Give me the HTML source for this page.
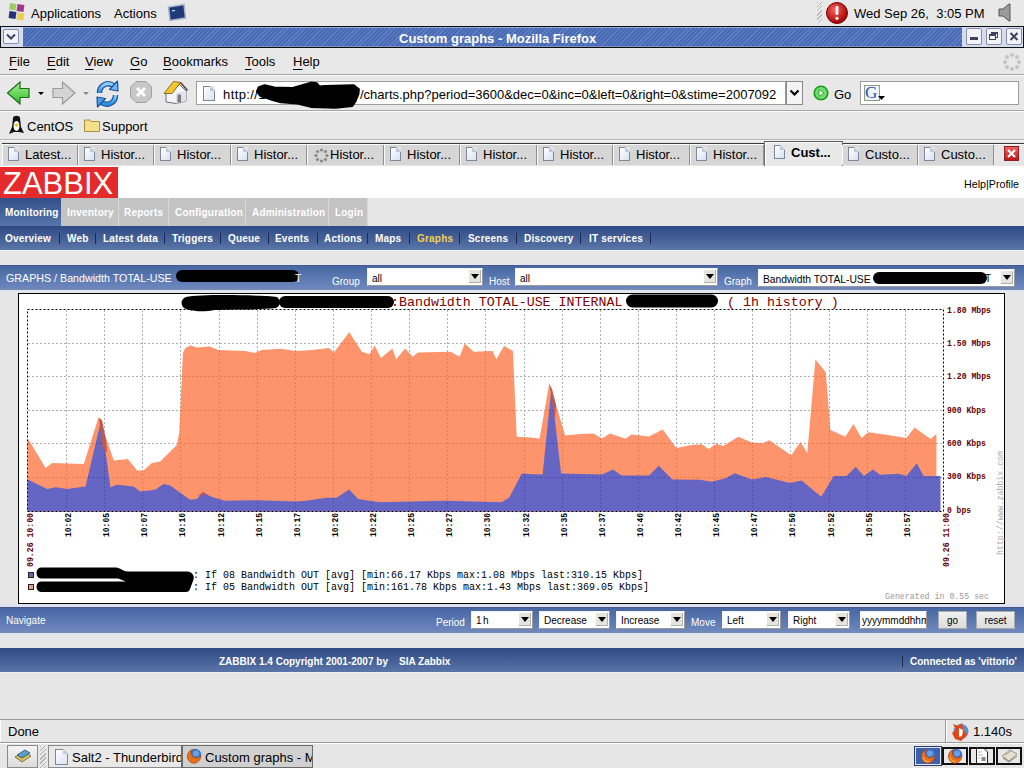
<!DOCTYPE html>
<html><head><meta charset="utf-8">
<style>
*{margin:0;padding:0;box-sizing:border-box}
html,body{width:1024px;height:768px;overflow:hidden;background:#e6e6e6;font-family:"Liberation Sans",sans-serif;color:#000}
.a{position:absolute}
.t{position:absolute;white-space:nowrap;line-height:1}
.sep{position:absolute;left:0;width:1024px;height:1px;background:#a6a6a6}
.hl{position:absolute;left:0;width:1024px;height:1px;background:#fbfbfb}
.zb{position:absolute;left:0;width:1024px}
.u{text-decoration:underline;text-underline-offset:3px}
.ff{font-size:13px}
.tab{position:absolute;top:145px;height:20px;background:#d6d6d6;border-left:1px solid #fafafa;border-right:1px solid #8e8e8e;font-size:13px}
.tab .pg{left:5px;top:2px;width:11px;height:14px}
.tab .t{left:22px;top:3px}
.pg{position:absolute;width:12px;height:15px;background:linear-gradient(135deg,#fff,#d9e2f2);border:1px solid #7d869c}
.pg:after{content:"";position:absolute;right:-1px;top:-1px;border-left:4px solid #bcc6dc;border-bottom:4px solid #bcc6dc;border-top:4px solid #e6e6e6;border-right:4px solid #e6e6e6;width:0;height:0;transform:scale(.6);transform-origin:100% 0}
.zs{position:absolute;height:18px;background:#fff;border-top:1px solid #f4f4f4;border-left:1px solid #f4f4f4;border-right:1px solid #999;border-bottom:1px solid #999;font-size:10px}
.zs i{position:absolute;right:1px;top:1px;width:12px;height:13px;background:#e6e4de;border-right:1px solid #b0b0b0;border-bottom:1px solid #b0b0b0}
.zs i:after{content:"";position:absolute;left:2px;top:4px;border-left:4px solid transparent;border-right:4px solid transparent;border-top:5px solid #000}
.zs b{position:absolute;left:4px;top:4px;font-weight:normal;white-space:nowrap;line-height:1}
.zl{position:absolute;color:#fff;font-size:10px;line-height:1;white-space:nowrap}
.mt{position:absolute;top:198px;height:28px;background:#c3c3c3;border-right:1px solid #d8d8d8;color:#fff;font-weight:bold;font-size:10px}
.mt span{position:absolute;top:10px;letter-spacing:0.2px;white-space:nowrap;line-height:1}
.sm{position:absolute;top:234px;color:#fff;font-weight:bold;font-size:10px;letter-spacing:0.2px;line-height:1;white-space:nowrap}
.smsep{position:absolute;top:233px;width:1px;height:11px;background:#1b2a55}
.btn{position:absolute;height:18px;background:linear-gradient(#f0f0f0,#dcdcdc);border:1px solid #aaa;font-size:10px;text-align:center;line-height:18px}
</style></head><body>
<!-- ===== GNOME panel ===== -->
<div class="a" style="left:0;top:0;width:1024px;height:25px;background:#e8e8e8"></div>
<svg class="a" style="left:6px;top:2px" width="22" height="20" viewBox="0 0 22 20">
 <rect x="3.5" y="1.5" width="6.5" height="6.5" fill="#9ccc66" transform="rotate(8 7 5)"/>
 <rect x="11" y="2.5" width="7" height="7" fill="#9b3b8b" transform="rotate(8 14 6)"/>
 <rect x="3" y="9.5" width="7" height="7" fill="#25307a" transform="rotate(8 6 13)"/>
 <rect x="11" y="11" width="7" height="7" fill="#e8d050" transform="rotate(8 14 14)"/>
</svg>
<div class="t ff" style="left:31px;top:7px">Applications</div>
<div class="t ff" style="left:114px;top:7px">Actions</div>
<svg class="a" style="left:167px;top:3px" width="20" height="19" viewBox="0 0 20 19">
 <path d="M1.5,4 L17,1.5 L18.5,15 L3,17.5Z" fill="#1e3a78" stroke="#a8b4c8" stroke-width="1.5"/>
 <path d="M5,8 L8,7.5" stroke="#fff" stroke-width="1"/>
</svg>
<div class="a" style="left:817px;top:2px;width:5px;height:21px;background:repeating-linear-gradient(135deg,#b8b8b8 0 1px,transparent 1px 3px)"></div>
<svg class="a" style="left:825px;top:1px" width="24" height="24" viewBox="0 0 24 24">
 <defs><radialGradient id="rg" cx="40%" cy="35%" r="65%"><stop offset="0" stop-color="#ff6060"/><stop offset="1" stop-color="#a00000"/></radialGradient></defs>
 <circle cx="12" cy="12" r="10.5" fill="url(#rg)" stroke="#700" stroke-width="1"/>
 <rect x="10.6" y="5" width="2.8" height="9" rx="1" fill="#fff"/><circle cx="12" cy="17.3" r="1.6" fill="#fff"/>
</svg>
<div class="t ff" style="left:854px;top:7px">Wed Sep 26,&nbsp; 3:05 PM</div>
<svg class="a" style="left:997px;top:3px" width="16" height="19" viewBox="0 0 16 19">
 <path d="M2,6 L6,6 L12,1 L13,1 L13,18 L12,18 L6,13 L2,13Z" fill="#9a9a9a" stroke="#555" stroke-width="1"/>
</svg>

<!-- ===== title bar ===== -->
<div class="a" style="left:0;top:26px;width:1024px;height:22px;background:#101010"></div>
<div class="a" style="left:1px;top:27px;width:22px;height:20px;background:#d4dcef"></div>
<div class="a" style="left:3px;top:29px;width:16px;height:15px;background:#f2f2f6;border:1px solid #8a8fa6;border-radius:2px"></div>
<svg class="a" style="left:6px;top:33px" width="10" height="7"><path d="M1,1.5 L5,5.5 L9,1.5" fill="none" stroke="#3c4260" stroke-width="2"/></svg>
<div class="a" style="left:23px;top:27px;width:939px;height:20px;background:repeating-linear-gradient(135deg,#4a6ab4 0px,#4a6ab4 2px,#6282c8 2px,#6282c8 3px)"></div>
<div class="a" style="left:23px;top:27px;width:939px;height:1px;background:#90a8dc"></div>
<div class="a" style="left:23px;top:46px;width:939px;height:1px;background:#7890c4"></div>
<div class="a" style="left:962px;top:27px;width:61px;height:20px;background:#d4dcef"></div>
<div class="a" style="left:966px;top:28px;width:16px;height:17px;background:#f2f2f6;border:1px solid #8a8fa6;border-radius:2px"></div>
<div class="a" style="left:970px;top:37px;width:8px;height:3px;background:#3c4260"></div>
<div class="a" style="left:986px;top:28px;width:16px;height:17px;background:#f2f2f6;border:1px solid #8a8fa6;border-radius:2px"></div>
<div class="a" style="left:991px;top:32px;width:7px;height:6px;border:1px solid #3c4260;border-top-width:2px"></div>
<div class="a" style="left:989px;top:34px;width:7px;height:6px;border:1px solid #3c4260;border-top-width:2px;background:#f2f2f6"></div>
<div class="a" style="left:1006px;top:28px;width:16px;height:17px;background:#f2f2f6;border:1px solid #8a8fa6;border-radius:2px"></div>
<svg class="a" style="left:1009px;top:32px" width="10" height="9"><path d="M1.5,1 L8.5,8 M8.5,1 L1.5,8" stroke="#3c4260" stroke-width="2"/></svg>
<div class="t" style="left:399px;top:32px;font-size:13px;font-weight:bold;color:#fff">Custom graphs - Mozilla Firefox</div>

<!-- ===== menu bar ===== -->
<div class="a" style="left:0;top:48px;width:1024px;height:90px;background:#e8e8e8"></div>
<div class="t ff" style="left:9px;top:55px"><span class="u">F</span>ile</div>
<div class="t ff" style="left:47px;top:55px"><span class="u">E</span>dit</div>
<div class="t ff" style="left:85px;top:55px"><span class="u">V</span>iew</div>
<div class="t ff" style="left:130px;top:55px"><span class="u">G</span>o</div>
<div class="t ff" style="left:163px;top:55px"><span class="u">B</span>ookmarks</div>
<div class="t ff" style="left:245px;top:55px"><span class="u">T</span>ools</div>
<div class="t ff" style="left:293px;top:55px"><span class="u">H</span>elp</div>
<svg class="a" style="left:1002px;top:52px" width="20" height="20" viewBox="0 0 20 20">
 <g fill="#c4c4c4"><circle cx="10" cy="3" r="2"/><circle cx="15" cy="5" r="2"/><circle cx="17" cy="10" r="2"/><circle cx="15" cy="15" r="2"/><circle cx="10" cy="17" r="2"/><circle cx="5" cy="15" r="2"/><circle cx="3" cy="10" r="2"/><circle cx="5" cy="5" r="2"/></g>
</svg>
<div class="sep" style="top:74px"></div><div class="hl" style="top:75px"></div>

<!-- ===== nav toolbar ===== -->
<svg class="a" style="left:0;top:76px" width="200" height="34" viewBox="0 0 200 34">
 <defs>
  <linearGradient id="gg" x1="0" y1="0" x2="0" y2="1"><stop offset="0" stop-color="#a8f08a"/><stop offset="1" stop-color="#2ebd2e"/></linearGradient>
  <linearGradient id="bg" x1="0" y1="0" x2="0" y2="1"><stop offset="0" stop-color="#8fd0f8"/><stop offset="1" stop-color="#2a8ee0"/></linearGradient>
 </defs>
 <path d="M7.5,17 L20,6 L20,12.5 L29,12.5 L29,21.5 L20,21.5 L20,28 Z" fill="url(#gg)" stroke="#1e6a1e" stroke-width="1.2"/>
 <path d="M38,16 L44,16 L41,19Z" fill="#000"/>
 <path d="M75,17 L62.5,6 L62.5,12.5 L53,12.5 L53,21.5 L62.5,21.5 L62.5,28 Z" fill="#d4d4d4" stroke="#9a9a9a" stroke-width="1.2"/>
 <path d="M83,16 L89,16 L86,19Z" fill="#888"/>
 <path d="M99.5,17 C99.5,9 108,5 114,10" fill="none" stroke="#1d4f9a" stroke-width="5.5"/>
 <path d="M99.5,17 C99.5,9 108,5 114,10" fill="none" stroke="url(#bg)" stroke-width="3.2"/>
 <path d="M109.5,13.5 L118,15 L117.5,5 Z" fill="#6ab8f0" stroke="#1d4f9a" stroke-width="1.2" stroke-linejoin="round"/>
 <path d="M115.5,19 C115.5,27 107,31 101,26" fill="none" stroke="#1d4f9a" stroke-width="5.5"/>
 <path d="M115.5,19 C115.5,27 107,31 101,26" fill="none" stroke="url(#bg)" stroke-width="3.2"/>
 <path d="M105.5,22.5 L97,21 L97.5,31 Z" fill="#4aa0e8" stroke="#1d4f9a" stroke-width="1.2" stroke-linejoin="round"/>
 <path d="M136,5.5 L146,5.5 L151.5,11 L151.5,21 L146,26.5 L136,26.5 L130.5,21 L130.5,11Z" fill="#c8c8c8" stroke="#a2a2a2" stroke-width="1"/>
 <path d="M137,12 L145,20 M145,12 L137,20" stroke="#fff" stroke-width="3"/>
 <path d="M166,17 L166,26 L176,27.5 L186,25 L186,15 L179,8 L172,16Z" fill="#f2f4f8" stroke="#6f7080" stroke-width="1"/>
 <path d="M176,17 L186,15 L186,25 L176,27.5Z" fill="#dfe3ea"/>
 <path d="M164,17.5 L173.5,5.5 L180.5,6.5 L172,17.5Z" fill="#f4c828" stroke="#8a7020" stroke-width="1" stroke-linejoin="round"/>
 <path d="M180.5,6.5 L187.5,14.5" stroke="#5a4a30" stroke-width="1.6"/>
 <rect x="177.5" y="18.5" width="3.5" height="8" fill="#7a7a7a"/>
</svg>
<div class="a" style="left:196px;top:81px;width:590px;height:24px;background:#fff;border:1px solid #9c9c9c"></div>
<div class="pg" style="left:203px;top:86px"></div>
<div class="t ff" style="left:223px;top:88px;letter-spacing:0.4px">http://1</div><div class="t ff" style="left:360px;top:88px">/charts.php?period=3600&amp;dec=0&amp;inc=0&amp;left=0&amp;right=0&amp;stime=2007092</div>
<svg class="a" style="left:0;top:0" width="400" height="112"><path d="M259.1,87.6 L264.6,85.8 L274.2,88.0 L292.0,88.6 L311.1,83.1 L316.6,83.7 L319.0,86.9 L324.8,86.4 L353.5,85.8 L358.4,89.4 L357.9,94.0 L355.1,100.9 L352.1,105.4 L335.7,107.2 L311.1,106.4 L297.4,103.1 L281.0,101.7 L272.8,99.5 L260.5,95.4 L257.5,91.3Z" fill="#000" stroke="#000" stroke-width="3" stroke-linejoin="round"/></svg>
<div class="a" style="left:786px;top:81px;width:17px;height:24px;background:#f4f4f4;border:1px solid #8a8a8a"></div>
<svg class="a" style="left:789px;top:89px" width="11" height="8"><path d="M1.5,1.5 L5.5,5.5 L9.5,1.5" fill="none" stroke="#000" stroke-width="2.2"/></svg>
<svg class="a" style="left:813px;top:85px" width="16" height="16" viewBox="0 0 16 16">
 <circle cx="8" cy="8" r="6.8" fill="#6fdc6f" stroke="#1d9a1d" stroke-width="1.6"/>
 <path d="M6,4.5 L11,8 L6,11.5Z" fill="#fff" stroke="#1d9a1d" stroke-width="0.8"/>
</svg>
<div class="t ff" style="left:834px;top:88px">Go</div>
<div class="a" style="left:860px;top:81px;width:159px;height:24px;background:#fff;border:1px solid #9c9c9c"></div>
<div class="a" style="left:864px;top:85px;width:16px;height:16px;background:#eef4ff;border:1px solid #8aa080"></div>
<div class="t" style="left:865px;top:84px;font-family:'Liberation Serif',serif;font-size:17px;color:#2850b0">G</div>
<svg class="a" style="left:878px;top:96px" width="8" height="5"><path d="M0,0 L7,0 L3.5,4Z" fill="#000"/></svg>
<div class="sep" style="top:110px"></div><div class="hl" style="top:111px"></div>

<!-- ===== bookmarks ===== -->
<svg class="a" style="left:8px;top:115px" width="17" height="20" viewBox="0 0 17 20">
 <path d="M5,3 C5,0 12,0 12,3 L13,12 L16,18 L11,17 L6,17 L1,19 L4,12Z" fill="#111"/>
 <ellipse cx="8.5" cy="11" rx="3" ry="5" fill="#fff"/>
 <path d="M6,9 L11,9 L8.5,12Z" fill="#f0c000"/>
</svg>
<div class="t ff" style="left:27px;top:120px">CentOS</div>
<svg class="a" style="left:84px;top:118px" width="16" height="14" viewBox="0 0 16 14">
 <path d="M0.5,2 L6,2 L7,3.5 L15.5,3.5 L15.5,13.5 L0.5,13.5Z" fill="#f4e08a" stroke="#a89040" stroke-width="1"/>
</svg>
<div class="t ff" style="left:102px;top:120px">Support</div>
<div class="a" style="left:0;top:139px;width:1024px;height:1px;background:#b4b4b4"></div>
<div class="a" style="left:0;top:140px;width:1024px;height:1px;background:#f8f8f8"></div>

<!-- ===== tabs ===== -->
<div class="a" style="left:0;top:141px;width:1024px;height:25px;background:#e6e6e6"></div>
<div class="a" style="left:2px;top:143px;width:1022px;height:1px;background:#3c3c3c"></div>
<div class="a" style="left:2px;top:144px;width:1022px;height:1px;background:#fcfcfc"></div>
<div class="tab" style="left:2px;width:76px"><div class="pg"></div><div class="t">Latest...</div></div>
<div class="tab" style="left:78px;width:76px"><div class="pg"></div><div class="t">Histor...</div></div>
<div class="tab" style="left:154px;width:77px"><div class="pg"></div><div class="t">Histor...</div></div>
<div class="tab" style="left:231px;width:76px"><div class="pg"></div><div class="t">Histor...</div></div>
<div class="tab" style="left:307px;width:77px"><svg class="a" style="left:6px;top:3px" width="15" height="15" viewBox="0 0 15 15"><g fill="#888"><circle cx="7.5" cy="2" r="1.6"/><circle cx="11.5" cy="3.5" r="1.6"/><circle cx="13" cy="7.5" r="1.6"/><circle cx="11.5" cy="11.5" r="1.6"/><circle cx="7.5" cy="13" r="1.6"/><circle cx="3.5" cy="11.5" r="1.6"/><circle cx="2" cy="7.5" r="1.6"/><circle cx="3.5" cy="3.5" r="1.6"/></g></svg><div class="t">Histor...</div></div>
<div class="tab" style="left:384px;width:76px"><div class="pg"></div><div class="t">Histor...</div></div>
<div class="tab" style="left:460px;width:77px"><div class="pg"></div><div class="t">Histor...</div></div>
<div class="tab" style="left:537px;width:76px"><div class="pg"></div><div class="t">Histor...</div></div>
<div class="tab" style="left:613px;width:77px"><div class="pg"></div><div class="t">Histor...</div></div>
<div class="tab" style="left:690px;width:74px"><div class="pg"></div><div class="t">Histor...</div></div>
<div class="a" style="left:764px;top:141px;width:79px;height:25px;background:#e8e8e8;border-left:1px solid #707070;border-right:1px solid #707070;border-top:1px solid #555"></div>
<div class="a" style="left:765px;top:142px;width:77px;height:1px;background:#fff"></div>
<div class="a" style="left:765px;top:142px;width:1px;height:23px;background:#fff"></div>
<div class="pg" style="left:774px;top:145px;width:11px;height:14px"></div>
<div class="t" style="left:791px;top:146px;font-size:13px;font-weight:bold">Cust...</div>
<div class="tab" style="left:842px;width:76px"><div class="pg"></div><div class="t">Custo...</div></div>
<div class="tab" style="left:918px;width:76px"><div class="pg"></div><div class="t">Custo...</div></div>
<div class="a" style="left:1004px;top:146px;width:15px;height:15px;background:linear-gradient(#f06060,#c01818);border:1px solid #902020"></div>
<svg class="a" style="left:1006px;top:148px" width="11" height="11"><path d="M2,2 L9,9 M9,2 L2,9" stroke="#fff" stroke-width="2.2"/></svg>

<!-- ===== zabbix header ===== -->
<div class="a" style="left:0;top:166px;width:1024px;height:32px;background:#fff"></div>
<div class="a" style="left:0;top:167px;width:118px;height:31px;background:#e42a2a"></div>
<div class="t" style="left:3px;top:168px;font-size:31px;color:#fff">ZABBIX</div>
<div class="t" style="left:964px;top:179px;font-size:10.7px">Help|Profile</div>

<!-- main menu -->
<div class="mt" style="left:0;width:61px;background:linear-gradient(#344f88,#5875ab);border-right:0"><span style="left:5px">Monitoring</span></div>
<div class="mt" style="left:61px;width:58px"><span style="left:6px">Inventory</span></div>
<div class="mt" style="left:119px;width:50px"><span style="left:5px">Reports</span></div>
<div class="mt" style="left:169px;width:77px"><span style="left:6px">Configuration</span></div>
<div class="mt" style="left:246px;width:83px"><span style="left:6px">Administration</span></div>
<div class="mt" style="left:329px;width:39px"><span style="left:6px">Login</span></div>

<!-- sub menu -->
<div class="zb" style="top:226px;height:24px;background:linear-gradient(#2f4984,#5a75a8)"></div>
<div class="sm" style="left:5px;color:#fff">Overview</div>
<div class="sm" style="left:67px;color:#fff">Web</div>
<div class="sm" style="left:103px;color:#fff">Latest data</div>
<div class="sm" style="left:172px;color:#fff">Triggers</div>
<div class="sm" style="left:228px;color:#fff">Queue</div>
<div class="sm" style="left:275px;color:#fff">Events</div>
<div class="sm" style="left:324px;color:#fff">Actions</div>
<div class="sm" style="left:375px;color:#fff">Maps</div>
<div class="sm" style="left:417px;color:#f0d050">Graphs</div>
<div class="sm" style="left:468px;color:#fff">Screens</div>
<div class="sm" style="left:524px;color:#fff">Discovery</div>
<div class="sm" style="left:589px;color:#fff">IT services</div>
<div class="smsep" style="left:59px"></div>
<div class="smsep" style="left:95px"></div>
<div class="smsep" style="left:164px"></div>
<div class="smsep" style="left:220px"></div>
<div class="smsep" style="left:268px"></div>
<div class="smsep" style="left:317px"></div>
<div class="smsep" style="left:367px"></div>
<div class="smsep" style="left:409px"></div>
<div class="smsep" style="left:459px"></div>
<div class="smsep" style="left:516px"></div>
<div class="smsep" style="left:580px"></div>
<div class="smsep" style="left:650px"></div>

<!-- graphs bar -->
<div class="zb" style="top:250px;height:1px;background:#eef0f8"></div>
<div class="zb" style="top:264px;height:1px;background:#e4e8f4"></div>
<div class="zb" style="top:265px;height:25px;background:linear-gradient(#4a66a0,#4b6ba6 15%,#6c86bd 90%,#7a8ab0)"></div>
<div class="zb" style="top:265px;height:1px;background:#4a5888"></div>
<div class="zb" style="top:290px;height:2px;background:#e2e6f2"></div>
<div class="zl" style="left:6px;top:273px;font-size:10.7px">GRAPHS / Bandwidth TOTAL-USE</div>
<div class="a" style="left:176px;top:270px;width:123px;height:12px;border-radius:6px;background:#000"></div>
<div class="zl" style="left:295px;top:273px;font-size:10.7px">T</div>
<div class="zl" style="left:332px;top:277px">Group</div>
<div class="zs" style="left:367px;top:268px;width:116px"><b style="top:5px">all</b><i></i></div>
<div class="zl" style="left:489px;top:277px">Host</div>
<div class="zs" style="left:515px;top:268px;width:203px"><b style="top:5px">all</b><i></i></div>
<div class="zl" style="left:724px;top:277px">Graph</div>
<div class="zs" style="left:758px;top:269px;width:257px"><b style="top:5px;font-size:10.3px">Bandwidth TOTAL-USE</b><i></i></div>
<div class="a" style="left:873px;top:272px;width:114px;height:12px;border-radius:6px;background:#000"></div>
<div class="t" style="left:985px;top:274px;font-size:10px">T</div>

<svg class="a" style="left:0;top:0" width="1024" height="768">
<rect x="18.5" y="293.5" width="986" height="310" fill="#fff" stroke="#000" stroke-width="1"/>
<line x1="28" y1="343.5" x2="943" y2="343.5" stroke="#b0b0b0" stroke-opacity="1" stroke-dasharray="2,2"/>
<line x1="28" y1="376.5" x2="943" y2="376.5" stroke="#b0b0b0" stroke-opacity="1" stroke-dasharray="2,2"/>
<line x1="28" y1="410.5" x2="943" y2="410.5" stroke="#b0b0b0" stroke-opacity="1" stroke-dasharray="2,2"/>
<line x1="28" y1="443.5" x2="943" y2="443.5" stroke="#b0b0b0" stroke-opacity="1" stroke-dasharray="2,2"/>
<line x1="28" y1="477.5" x2="943" y2="477.5" stroke="#b0b0b0" stroke-opacity="1" stroke-dasharray="2,2"/>
<line x1="66.5" y1="310" x2="66.5" y2="511" stroke="#b0b0b0" stroke-opacity="1" stroke-dasharray="2,2"/>
<line x1="104.5" y1="310" x2="104.5" y2="511" stroke="#b0b0b0" stroke-opacity="1" stroke-dasharray="2,2"/>
<line x1="142.5" y1="310" x2="142.5" y2="511" stroke="#b0b0b0" stroke-opacity="1" stroke-dasharray="2,2"/>
<line x1="180.5" y1="310" x2="180.5" y2="511" stroke="#b0b0b0" stroke-opacity="1" stroke-dasharray="2,2"/>
<line x1="219.5" y1="310" x2="219.5" y2="511" stroke="#b0b0b0" stroke-opacity="1" stroke-dasharray="2,2"/>
<line x1="257.5" y1="310" x2="257.5" y2="511" stroke="#b0b0b0" stroke-opacity="1" stroke-dasharray="2,2"/>
<line x1="295.5" y1="310" x2="295.5" y2="511" stroke="#b0b0b0" stroke-opacity="1" stroke-dasharray="2,2"/>
<line x1="333.5" y1="310" x2="333.5" y2="511" stroke="#b0b0b0" stroke-opacity="1" stroke-dasharray="2,2"/>
<line x1="371.5" y1="310" x2="371.5" y2="511" stroke="#b0b0b0" stroke-opacity="1" stroke-dasharray="2,2"/>
<line x1="409.5" y1="310" x2="409.5" y2="511" stroke="#b0b0b0" stroke-opacity="1" stroke-dasharray="2,2"/>
<line x1="447.5" y1="310" x2="447.5" y2="511" stroke="#b0b0b0" stroke-opacity="1" stroke-dasharray="2,2"/>
<line x1="485.5" y1="310" x2="485.5" y2="511" stroke="#b0b0b0" stroke-opacity="1" stroke-dasharray="2,2"/>
<line x1="524.5" y1="310" x2="524.5" y2="511" stroke="#b0b0b0" stroke-opacity="1" stroke-dasharray="2,2"/>
<line x1="562.5" y1="310" x2="562.5" y2="511" stroke="#b0b0b0" stroke-opacity="1" stroke-dasharray="2,2"/>
<line x1="600.5" y1="310" x2="600.5" y2="511" stroke="#b0b0b0" stroke-opacity="1" stroke-dasharray="2,2"/>
<line x1="638.5" y1="310" x2="638.5" y2="511" stroke="#b0b0b0" stroke-opacity="1" stroke-dasharray="2,2"/>
<line x1="676.5" y1="310" x2="676.5" y2="511" stroke="#b0b0b0" stroke-opacity="1" stroke-dasharray="2,2"/>
<line x1="714.5" y1="310" x2="714.5" y2="511" stroke="#b0b0b0" stroke-opacity="1" stroke-dasharray="2,2"/>
<line x1="752.5" y1="310" x2="752.5" y2="511" stroke="#b0b0b0" stroke-opacity="1" stroke-dasharray="2,2"/>
<line x1="790.5" y1="310" x2="790.5" y2="511" stroke="#b0b0b0" stroke-opacity="1" stroke-dasharray="2,2"/>
<line x1="829.5" y1="310" x2="829.5" y2="511" stroke="#b0b0b0" stroke-opacity="1" stroke-dasharray="2,2"/>
<line x1="867.5" y1="310" x2="867.5" y2="511" stroke="#b0b0b0" stroke-opacity="1" stroke-dasharray="2,2"/>
<line x1="905.5" y1="310" x2="905.5" y2="511" stroke="#b0b0b0" stroke-opacity="1" stroke-dasharray="2,2"/>
<polygon points="27.5,511.5 27.5,439.0 28.2,439.0 45.6,468.0 52.2,463.0 83.8,464.0 98.8,416.6 113.7,460.6 127.8,459.0 137.0,470.6 143.6,470.6 151.9,463.0 160.2,461.5 176.8,444.9 179.3,433.0 182.9,353.0 185.4,348.0 190.5,345.4 196.8,347.4 209.5,346.6 218.4,350.0 245.0,351.0 255.2,353.0 261.6,350.0 280.6,348.7 295.8,351.0 312.3,350.0 328.8,348.0 333.9,352.5 349.2,332.2 361.9,351.7 369.5,354.3 374.6,345.4 381.0,358.0 392.4,348.4 396.2,359.3 405.0,348.4 412.7,356.8 417.8,352.5 450.8,351.7 459.6,356.8 464.7,343.4 473.6,351.7 492.6,351.0 496.4,359.3 504.0,346.0 512.9,351.0 516.7,436.8 526.9,437.3 539.6,438.4 549.4,382.7 556.2,405.2 565.0,435.4 580.6,434.0 593.3,433.5 602.1,438.4 610.0,433.5 625.6,438.8 631.4,434.5 649.0,436.4 662.7,429.6 676.3,448.0 690.0,445.2 701.7,444.2 708.6,449.0 716.4,443.8 723.2,446.0 738.2,436.8 752.0,442.6 762.4,443.2 769.3,440.3 791.2,455.2 800.4,441.9 807.3,453.0 815.4,359.6 825.8,372.3 830.4,429.9 845.4,436.8 853.4,424.1 861.5,438.0 868.4,432.2 884.5,434.5 906.4,438.0 914.5,427.6 930.6,439.1 936.4,434.0 936.4,511.5" fill="#fe946c"/>
<clipPath id="oclip"><polygon points="27.5,511.5 27.5,439.0 28.2,439.0 45.6,468.0 52.2,463.0 83.8,464.0 98.8,416.6 113.7,460.6 127.8,459.0 137.0,470.6 143.6,470.6 151.9,463.0 160.2,461.5 176.8,444.9 179.3,433.0 182.9,353.0 185.4,348.0 190.5,345.4 196.8,347.4 209.5,346.6 218.4,350.0 245.0,351.0 255.2,353.0 261.6,350.0 280.6,348.7 295.8,351.0 312.3,350.0 328.8,348.0 333.9,352.5 349.2,332.2 361.9,351.7 369.5,354.3 374.6,345.4 381.0,358.0 392.4,348.4 396.2,359.3 405.0,348.4 412.7,356.8 417.8,352.5 450.8,351.7 459.6,356.8 464.7,343.4 473.6,351.7 492.6,351.0 496.4,359.3 504.0,346.0 512.9,351.0 516.7,436.8 526.9,437.3 539.6,438.4 549.4,382.7 556.2,405.2 565.0,435.4 580.6,434.0 593.3,433.5 602.1,438.4 610.0,433.5 625.6,438.8 631.4,434.5 649.0,436.4 662.7,429.6 676.3,448.0 690.0,445.2 701.7,444.2 708.6,449.0 716.4,443.8 723.2,446.0 738.2,436.8 752.0,442.6 762.4,443.2 769.3,440.3 791.2,455.2 800.4,441.9 807.3,453.0 815.4,359.6 825.8,372.3 830.4,429.9 845.4,436.8 853.4,424.1 861.5,438.0 868.4,432.2 884.5,434.5 906.4,438.0 914.5,427.6 930.6,439.1 936.4,434.0 936.4,511.5"/></clipPath>
<g clip-path="url(#oclip)">
<line x1="28" y1="343.5" x2="943" y2="343.5" stroke="#c04818" stroke-opacity="0.32" stroke-dasharray="2,2"/>
<line x1="28" y1="376.5" x2="943" y2="376.5" stroke="#c04818" stroke-opacity="0.32" stroke-dasharray="2,2"/>
<line x1="28" y1="410.5" x2="943" y2="410.5" stroke="#c04818" stroke-opacity="0.32" stroke-dasharray="2,2"/>
<line x1="28" y1="443.5" x2="943" y2="443.5" stroke="#c04818" stroke-opacity="0.32" stroke-dasharray="2,2"/>
<line x1="28" y1="477.5" x2="943" y2="477.5" stroke="#c04818" stroke-opacity="0.32" stroke-dasharray="2,2"/>
<line x1="66.5" y1="310" x2="66.5" y2="511" stroke="#c04818" stroke-opacity="0.32" stroke-dasharray="2,2"/>
<line x1="104.5" y1="310" x2="104.5" y2="511" stroke="#c04818" stroke-opacity="0.32" stroke-dasharray="2,2"/>
<line x1="142.5" y1="310" x2="142.5" y2="511" stroke="#c04818" stroke-opacity="0.32" stroke-dasharray="2,2"/>
<line x1="180.5" y1="310" x2="180.5" y2="511" stroke="#c04818" stroke-opacity="0.32" stroke-dasharray="2,2"/>
<line x1="219.5" y1="310" x2="219.5" y2="511" stroke="#c04818" stroke-opacity="0.32" stroke-dasharray="2,2"/>
<line x1="257.5" y1="310" x2="257.5" y2="511" stroke="#c04818" stroke-opacity="0.32" stroke-dasharray="2,2"/>
<line x1="295.5" y1="310" x2="295.5" y2="511" stroke="#c04818" stroke-opacity="0.32" stroke-dasharray="2,2"/>
<line x1="333.5" y1="310" x2="333.5" y2="511" stroke="#c04818" stroke-opacity="0.32" stroke-dasharray="2,2"/>
<line x1="371.5" y1="310" x2="371.5" y2="511" stroke="#c04818" stroke-opacity="0.32" stroke-dasharray="2,2"/>
<line x1="409.5" y1="310" x2="409.5" y2="511" stroke="#c04818" stroke-opacity="0.32" stroke-dasharray="2,2"/>
<line x1="447.5" y1="310" x2="447.5" y2="511" stroke="#c04818" stroke-opacity="0.32" stroke-dasharray="2,2"/>
<line x1="485.5" y1="310" x2="485.5" y2="511" stroke="#c04818" stroke-opacity="0.32" stroke-dasharray="2,2"/>
<line x1="524.5" y1="310" x2="524.5" y2="511" stroke="#c04818" stroke-opacity="0.32" stroke-dasharray="2,2"/>
<line x1="562.5" y1="310" x2="562.5" y2="511" stroke="#c04818" stroke-opacity="0.32" stroke-dasharray="2,2"/>
<line x1="600.5" y1="310" x2="600.5" y2="511" stroke="#c04818" stroke-opacity="0.32" stroke-dasharray="2,2"/>
<line x1="638.5" y1="310" x2="638.5" y2="511" stroke="#c04818" stroke-opacity="0.32" stroke-dasharray="2,2"/>
<line x1="676.5" y1="310" x2="676.5" y2="511" stroke="#c04818" stroke-opacity="0.32" stroke-dasharray="2,2"/>
<line x1="714.5" y1="310" x2="714.5" y2="511" stroke="#c04818" stroke-opacity="0.32" stroke-dasharray="2,2"/>
<line x1="752.5" y1="310" x2="752.5" y2="511" stroke="#c04818" stroke-opacity="0.32" stroke-dasharray="2,2"/>
<line x1="790.5" y1="310" x2="790.5" y2="511" stroke="#c04818" stroke-opacity="0.32" stroke-dasharray="2,2"/>
<line x1="829.5" y1="310" x2="829.5" y2="511" stroke="#c04818" stroke-opacity="0.32" stroke-dasharray="2,2"/>
<line x1="867.5" y1="310" x2="867.5" y2="511" stroke="#c04818" stroke-opacity="0.32" stroke-dasharray="2,2"/>
<line x1="905.5" y1="310" x2="905.5" y2="511" stroke="#c04818" stroke-opacity="0.32" stroke-dasharray="2,2"/>
</g>
<polygon points="27.5,511.5 27.5,479.7 28.2,479.7 47.3,488.9 55.6,487.2 67.2,488.9 85.5,486.4 101.2,420.0 110.4,487.2 117.0,484.7 133.6,486.4 140.3,491.4 155.2,489.7 163.5,483.9 170.2,485.5 190.1,499.7 196.8,499.0 203.0,492.6 212.0,497.0 224.8,500.7 257.8,500.2 295.8,501.5 306.0,500.7 326.3,497.7 336.4,497.7 349.2,489.5 358.1,499.0 379.7,502.2 445.7,500.7 501.5,502.2 509.1,497.7 521.8,473.6 534.0,474.3 542.6,474.5 551.3,389.5 561.1,473.5 602.1,474.5 612.9,469.6 621.7,475.5 649.0,475.5 658.8,465.7 672.4,479.4 699.8,479.8 711.5,481.7 725.5,478.3 734.7,473.2 752.0,479.4 765.9,477.1 790.0,482.9 801.6,480.6 821.2,496.7 833.8,476.0 846.5,476.0 855.7,466.8 863.8,476.0 873.0,469.5 880.0,474.8 898.4,473.7 906.4,476.0 916.8,463.3 923.7,476.0 940.5,476.0 940.5,511.5" fill="#6565c4"/>
<clipPath id="bclip"><polygon points="27.5,511.5 27.5,479.7 28.2,479.7 47.3,488.9 55.6,487.2 67.2,488.9 85.5,486.4 101.2,420.0 110.4,487.2 117.0,484.7 133.6,486.4 140.3,491.4 155.2,489.7 163.5,483.9 170.2,485.5 190.1,499.7 196.8,499.0 203.0,492.6 212.0,497.0 224.8,500.7 257.8,500.2 295.8,501.5 306.0,500.7 326.3,497.7 336.4,497.7 349.2,489.5 358.1,499.0 379.7,502.2 445.7,500.7 501.5,502.2 509.1,497.7 521.8,473.6 534.0,474.3 542.6,474.5 551.3,389.5 561.1,473.5 602.1,474.5 612.9,469.6 621.7,475.5 649.0,475.5 658.8,465.7 672.4,479.4 699.8,479.8 711.5,481.7 725.5,478.3 734.7,473.2 752.0,479.4 765.9,477.1 790.0,482.9 801.6,480.6 821.2,496.7 833.8,476.0 846.5,476.0 855.7,466.8 863.8,476.0 873.0,469.5 880.0,474.8 898.4,473.7 906.4,476.0 916.8,463.3 923.7,476.0 940.5,476.0 940.5,511.5"/></clipPath>
<g clip-path="url(#bclip)">
<line x1="28" y1="343.5" x2="943" y2="343.5" stroke="#1a1a80" stroke-opacity="0.3" stroke-dasharray="2,2"/>
<line x1="28" y1="376.5" x2="943" y2="376.5" stroke="#1a1a80" stroke-opacity="0.3" stroke-dasharray="2,2"/>
<line x1="28" y1="410.5" x2="943" y2="410.5" stroke="#1a1a80" stroke-opacity="0.3" stroke-dasharray="2,2"/>
<line x1="28" y1="443.5" x2="943" y2="443.5" stroke="#1a1a80" stroke-opacity="0.3" stroke-dasharray="2,2"/>
<line x1="28" y1="477.5" x2="943" y2="477.5" stroke="#1a1a80" stroke-opacity="0.3" stroke-dasharray="2,2"/>
<line x1="66.5" y1="310" x2="66.5" y2="511" stroke="#1a1a80" stroke-opacity="0.3" stroke-dasharray="2,2"/>
<line x1="104.5" y1="310" x2="104.5" y2="511" stroke="#1a1a80" stroke-opacity="0.3" stroke-dasharray="2,2"/>
<line x1="142.5" y1="310" x2="142.5" y2="511" stroke="#1a1a80" stroke-opacity="0.3" stroke-dasharray="2,2"/>
<line x1="180.5" y1="310" x2="180.5" y2="511" stroke="#1a1a80" stroke-opacity="0.3" stroke-dasharray="2,2"/>
<line x1="219.5" y1="310" x2="219.5" y2="511" stroke="#1a1a80" stroke-opacity="0.3" stroke-dasharray="2,2"/>
<line x1="257.5" y1="310" x2="257.5" y2="511" stroke="#1a1a80" stroke-opacity="0.3" stroke-dasharray="2,2"/>
<line x1="295.5" y1="310" x2="295.5" y2="511" stroke="#1a1a80" stroke-opacity="0.3" stroke-dasharray="2,2"/>
<line x1="333.5" y1="310" x2="333.5" y2="511" stroke="#1a1a80" stroke-opacity="0.3" stroke-dasharray="2,2"/>
<line x1="371.5" y1="310" x2="371.5" y2="511" stroke="#1a1a80" stroke-opacity="0.3" stroke-dasharray="2,2"/>
<line x1="409.5" y1="310" x2="409.5" y2="511" stroke="#1a1a80" stroke-opacity="0.3" stroke-dasharray="2,2"/>
<line x1="447.5" y1="310" x2="447.5" y2="511" stroke="#1a1a80" stroke-opacity="0.3" stroke-dasharray="2,2"/>
<line x1="485.5" y1="310" x2="485.5" y2="511" stroke="#1a1a80" stroke-opacity="0.3" stroke-dasharray="2,2"/>
<line x1="524.5" y1="310" x2="524.5" y2="511" stroke="#1a1a80" stroke-opacity="0.3" stroke-dasharray="2,2"/>
<line x1="562.5" y1="310" x2="562.5" y2="511" stroke="#1a1a80" stroke-opacity="0.3" stroke-dasharray="2,2"/>
<line x1="600.5" y1="310" x2="600.5" y2="511" stroke="#1a1a80" stroke-opacity="0.3" stroke-dasharray="2,2"/>
<line x1="638.5" y1="310" x2="638.5" y2="511" stroke="#1a1a80" stroke-opacity="0.3" stroke-dasharray="2,2"/>
<line x1="676.5" y1="310" x2="676.5" y2="511" stroke="#1a1a80" stroke-opacity="0.3" stroke-dasharray="2,2"/>
<line x1="714.5" y1="310" x2="714.5" y2="511" stroke="#1a1a80" stroke-opacity="0.3" stroke-dasharray="2,2"/>
<line x1="752.5" y1="310" x2="752.5" y2="511" stroke="#1a1a80" stroke-opacity="0.3" stroke-dasharray="2,2"/>
<line x1="790.5" y1="310" x2="790.5" y2="511" stroke="#1a1a80" stroke-opacity="0.3" stroke-dasharray="2,2"/>
<line x1="829.5" y1="310" x2="829.5" y2="511" stroke="#1a1a80" stroke-opacity="0.3" stroke-dasharray="2,2"/>
<line x1="867.5" y1="310" x2="867.5" y2="511" stroke="#1a1a80" stroke-opacity="0.3" stroke-dasharray="2,2"/>
<line x1="905.5" y1="310" x2="905.5" y2="511" stroke="#1a1a80" stroke-opacity="0.3" stroke-dasharray="2,2"/>
</g>
<polygon points="99,418 102,420 106,440 107,452 103,450" fill="#c0584e"/>
<polygon points="549.5,385 552,389 556,405 555,420 552,400" fill="#c0584e"/>
<polygon points="198,496 203,492 208,495 203,495" fill="#b05868"/>
<rect x="27.5" y="309.5" width="916" height="202" fill="none" stroke="#000" stroke-dasharray="2,2"/>
<text x="947" y="312.8" font-family="Liberation Mono" font-weight="bold" font-size="8.5" fill="#6b0000" textLength="44" lengthAdjust="spacingAndGlyphs">1.80 Mbps</text>
<text x="947" y="346.1" font-family="Liberation Mono" font-weight="bold" font-size="8.5" fill="#6b0000" textLength="44" lengthAdjust="spacingAndGlyphs">1.50 Mbps</text>
<text x="947" y="379.4" font-family="Liberation Mono" font-weight="bold" font-size="8.5" fill="#6b0000" textLength="44" lengthAdjust="spacingAndGlyphs">1.20 Mbps</text>
<text x="947" y="412.7" font-family="Liberation Mono" font-weight="bold" font-size="8.5" fill="#6b0000" textLength="39" lengthAdjust="spacingAndGlyphs">900 Kbps</text>
<text x="947" y="446.0" font-family="Liberation Mono" font-weight="bold" font-size="8.5" fill="#6b0000" textLength="39" lengthAdjust="spacingAndGlyphs">600 Kbps</text>
<text x="947" y="479.3" font-family="Liberation Mono" font-weight="bold" font-size="8.5" fill="#6b0000" textLength="39" lengthAdjust="spacingAndGlyphs">300 Kbps</text>
<text x="947" y="512.6" font-family="Liberation Mono" font-weight="bold" font-size="8.5" fill="#6b0000" textLength="24" lengthAdjust="spacingAndGlyphs">0 bps</text>
<text transform="translate(32.5,513) rotate(-90)" text-anchor="end" font-family="Liberation Mono" font-weight="bold" font-size="8.5" fill="#6b0000" textLength="54" lengthAdjust="spacingAndGlyphs">09.26 10:00</text>
<text transform="translate(70.5,513) rotate(-90)" text-anchor="end" font-family="Liberation Mono" font-weight="bold" font-size="8.5" fill="#000" textLength="24" lengthAdjust="spacingAndGlyphs">10:02</text>
<text transform="translate(108.5,513) rotate(-90)" text-anchor="end" font-family="Liberation Mono" font-weight="bold" font-size="8.5" fill="#000" textLength="24" lengthAdjust="spacingAndGlyphs">10:05</text>
<text transform="translate(146.5,513) rotate(-90)" text-anchor="end" font-family="Liberation Mono" font-weight="bold" font-size="8.5" fill="#000" textLength="24" lengthAdjust="spacingAndGlyphs">10:07</text>
<text transform="translate(184.5,513) rotate(-90)" text-anchor="end" font-family="Liberation Mono" font-weight="bold" font-size="8.5" fill="#000" textLength="24" lengthAdjust="spacingAndGlyphs">10:10</text>
<text transform="translate(223.5,513) rotate(-90)" text-anchor="end" font-family="Liberation Mono" font-weight="bold" font-size="8.5" fill="#000" textLength="24" lengthAdjust="spacingAndGlyphs">10:12</text>
<text transform="translate(261.5,513) rotate(-90)" text-anchor="end" font-family="Liberation Mono" font-weight="bold" font-size="8.5" fill="#000" textLength="24" lengthAdjust="spacingAndGlyphs">10:15</text>
<text transform="translate(299.5,513) rotate(-90)" text-anchor="end" font-family="Liberation Mono" font-weight="bold" font-size="8.5" fill="#000" textLength="24" lengthAdjust="spacingAndGlyphs">10:17</text>
<text transform="translate(337.5,513) rotate(-90)" text-anchor="end" font-family="Liberation Mono" font-weight="bold" font-size="8.5" fill="#000" textLength="24" lengthAdjust="spacingAndGlyphs">10:20</text>
<text transform="translate(375.5,513) rotate(-90)" text-anchor="end" font-family="Liberation Mono" font-weight="bold" font-size="8.5" fill="#000" textLength="24" lengthAdjust="spacingAndGlyphs">10:22</text>
<text transform="translate(413.5,513) rotate(-90)" text-anchor="end" font-family="Liberation Mono" font-weight="bold" font-size="8.5" fill="#000" textLength="24" lengthAdjust="spacingAndGlyphs">10:25</text>
<text transform="translate(451.5,513) rotate(-90)" text-anchor="end" font-family="Liberation Mono" font-weight="bold" font-size="8.5" fill="#000" textLength="24" lengthAdjust="spacingAndGlyphs">10:27</text>
<text transform="translate(489.5,513) rotate(-90)" text-anchor="end" font-family="Liberation Mono" font-weight="bold" font-size="8.5" fill="#000" textLength="24" lengthAdjust="spacingAndGlyphs">10:30</text>
<text transform="translate(528.5,513) rotate(-90)" text-anchor="end" font-family="Liberation Mono" font-weight="bold" font-size="8.5" fill="#000" textLength="24" lengthAdjust="spacingAndGlyphs">10:32</text>
<text transform="translate(566.5,513) rotate(-90)" text-anchor="end" font-family="Liberation Mono" font-weight="bold" font-size="8.5" fill="#000" textLength="24" lengthAdjust="spacingAndGlyphs">10:35</text>
<text transform="translate(604.5,513) rotate(-90)" text-anchor="end" font-family="Liberation Mono" font-weight="bold" font-size="8.5" fill="#000" textLength="24" lengthAdjust="spacingAndGlyphs">10:37</text>
<text transform="translate(642.5,513) rotate(-90)" text-anchor="end" font-family="Liberation Mono" font-weight="bold" font-size="8.5" fill="#000" textLength="24" lengthAdjust="spacingAndGlyphs">10:40</text>
<text transform="translate(680.5,513) rotate(-90)" text-anchor="end" font-family="Liberation Mono" font-weight="bold" font-size="8.5" fill="#000" textLength="24" lengthAdjust="spacingAndGlyphs">10:42</text>
<text transform="translate(718.5,513) rotate(-90)" text-anchor="end" font-family="Liberation Mono" font-weight="bold" font-size="8.5" fill="#000" textLength="24" lengthAdjust="spacingAndGlyphs">10:45</text>
<text transform="translate(756.5,513) rotate(-90)" text-anchor="end" font-family="Liberation Mono" font-weight="bold" font-size="8.5" fill="#000" textLength="24" lengthAdjust="spacingAndGlyphs">10:47</text>
<text transform="translate(794.5,513) rotate(-90)" text-anchor="end" font-family="Liberation Mono" font-weight="bold" font-size="8.5" fill="#000" textLength="24" lengthAdjust="spacingAndGlyphs">10:50</text>
<text transform="translate(833.5,513) rotate(-90)" text-anchor="end" font-family="Liberation Mono" font-weight="bold" font-size="8.5" fill="#000" textLength="24" lengthAdjust="spacingAndGlyphs">10:52</text>
<text transform="translate(871.5,513) rotate(-90)" text-anchor="end" font-family="Liberation Mono" font-weight="bold" font-size="8.5" fill="#000" textLength="24" lengthAdjust="spacingAndGlyphs">10:55</text>
<text transform="translate(909.5,513) rotate(-90)" text-anchor="end" font-family="Liberation Mono" font-weight="bold" font-size="8.5" fill="#000" textLength="24" lengthAdjust="spacingAndGlyphs">10:57</text>
<text transform="translate(948.5,513) rotate(-90)" text-anchor="end" font-family="Liberation Mono" font-weight="bold" font-size="8.5" fill="#6b0000" textLength="54" lengthAdjust="spacingAndGlyphs">09.26 11:00</text>
<text x="391" y="306" font-family="Liberation Mono" font-size="13.3" fill="#800000">:Bandwidth TOTAL-USE INTERNAL <tspan x="727">( 1h history )</tspan></text>
<rect x="28.5" y="572.5" width="5" height="5" fill="#6666b0" stroke="#222"/>
<rect x="28.5" y="584.5" width="5" height="5" fill="#eea088" stroke="#222"/>
<text x="193" y="578" font-family="Liberation Mono" font-size="10" fill="#000">: If 08 Bandwidth OUT [avg] [min:66.17 Kbps max:1.08 Mbps last:310.15 Kbps]</text>
<text x="193" y="590" font-family="Liberation Mono" font-size="10" fill="#000">: If 05 Bandwidth OUT [avg] [min:161.78 Kbps max:1.43 Mbps last:369.05 Kbps]</text>
<text x="885" y="599" font-family="Liberation Mono" font-size="8.5" fill="#999" textLength="104" lengthAdjust="spacingAndGlyphs">Generated in 0.55 sec</text>
<text transform="translate(1003,555) rotate(-90)" font-family="Liberation Mono" font-size="8.5" fill="#aaa" textLength="104" lengthAdjust="spacingAndGlyphs">http://www.zabbix.com</text>
<path d="M186,297 C200,294 260,295 277,297 C281,300 281,306 276,308 C255,310 230,309 215,310 C205,312 190,312 184,308 C180,304 181,299 186,297Z" fill="#000"/>
<rect x="279" y="296" width="115" height="12" rx="6" fill="#000"/>
<rect x="626" y="294.5" width="92" height="13" rx="6.5" fill="#000"/>
<path d="M41,567.5 L116,567.5 C120,567.5 123,571.5 128,571.5 L187,571.5 C193,571.5 195,577 193,581 L190,589 C189,592 187,592 185,592 L41,592 C35,592 35,581.5 41,581.5 L126,581.5 L118,578.5 L41,578.5 C35,578.5 35,567.5 41,567.5 Z" fill="#000"/>
</svg>

<!-- navigate -->
<div class="zb" style="top:604px;height:3px;background:#dfe2f3"></div>
<div class="zb" style="top:607px;height:26px;background:linear-gradient(#4a66a0,#4b6ba6 15%,#6c86bd 90%,#7a8ab0)"></div>
<div class="zb" style="top:607px;height:1px;background:#4a5888"></div>
<div class="zb" style="top:633px;height:2px;background:#dde8ee"></div>
<div class="zl" style="left:6px;top:616px;font-size:10px">Navigate</div>
<div class="zl" style="left:436px;top:618px">Period</div>
<div class="zs" style="left:471px;top:611px;width:62px"><b style="letter-spacing:1.5px">1h</b><i></i></div>
<div class="zs" style="left:539px;top:611px;width:71px"><b>Decrease</b><i></i></div>
<div class="zs" style="left:616px;top:611px;width:69px"><b>Increase</b><i></i></div>
<div class="zl" style="left:691px;top:618px">Move</div>
<div class="zs" style="left:722px;top:611px;width:59px"><b>Left</b><i></i></div>
<div class="zs" style="left:788px;top:611px;width:62px"><b>Right</b><i></i></div>
<div class="zs" style="left:860px;top:611px;width:67px;overflow:hidden"><b style="left:1px">yyyymmddhhmm</b></div>
<div class="btn" style="left:938px;top:611px;width:29px">go</div>
<div class="btn" style="left:976px;top:611px;width:39px">reset</div>

<!-- footer -->
<div class="zb" style="top:648px;height:24px;background:linear-gradient(#2f4984,#5a75a8)"></div>
<div class="zb" style="top:672px;height:1px;background:#eef0f4"></div>
<div class="t" style="left:219px;top:657px;font-size:10px;font-weight:bold;color:#fff">ZABBIX 1.4 Copyright 2001-2007 by</div>
<div class="t" style="left:399px;top:657px;font-size:10px;font-weight:bold;color:#fff">SIA Zabbix</div>
<div class="a" style="left:902px;top:656px;width:1px;height:11px;background:#1b2a55"></div>
<div class="t" style="left:910px;top:657px;font-size:10px;font-weight:bold;color:#fff">Connected as 'vittorio'</div>

<!-- ===== status bar ===== -->
<div class="a" style="left:0;top:719px;width:1024px;height:1px;background:#9a9a9a"></div>
<div class="a" style="left:0;top:720px;width:1024px;height:22px;background:#e6e6e6"></div>
<div class="a" style="left:0;top:720px;width:1px;height:22px;background:#fff"></div>
<div class="a" style="left:945px;top:720px;width:1px;height:22px;background:#9a9a9a"></div>
<div class="a" style="left:946px;top:720px;width:1px;height:22px;background:#fff"></div>
<div class="a" style="left:0;top:742px;width:1024px;height:1px;background:#9a9a9a"></div>
<div class="a" style="left:0;top:743px;width:1024px;height:1px;background:#fff"></div>
<div class="t ff" style="left:8px;top:725px">Done</div>
<svg class="a" style="left:950px;top:721px" width="20" height="21" viewBox="0 0 20 21">
 <circle cx="11" cy="10.5" r="7.5" fill="#5f8fc0"/>
 <path d="M3,3 L8,5 L12,2 L13,8 L17,14 L11,20 L5,18 L2,12 L6,9Z" fill="#e04818"/>
 <path d="M9,7 L13,9 L12,15 L9,16Z" fill="#fff"/>
</svg>
<div class="t ff" style="left:973px;top:725px">1.140s</div>

<!-- ===== taskbar ===== -->
<div class="a" style="left:0;top:744px;width:1024px;height:24px;background:#e6e6e6"></div>
<div class="a" style="left:7px;top:745px;width:31px;height:23px;background:linear-gradient(#f4f4f4,#dcdcdc);border:1px solid #8a8a8a"></div>
<svg class="a" style="left:13px;top:748px" width="20" height="17" viewBox="0 0 20 17"><path d="M2,9 L11,4 L18,8 L9,14Z" fill="#d8c060" stroke="#6a5a20" stroke-width="0.8"/><path d="M4,7 L12,2 L17,5 L9,10Z" fill="#5aa0c8" stroke="#2a5070" stroke-width="0.8"/></svg>
<div class="a" style="left:40px;top:746px;width:6px;height:22px;background:repeating-linear-gradient(135deg,#b0b0b0 0 1px,transparent 1px 3px)"></div>
<div class="a" style="left:48px;top:745px;width:133px;height:23px;background:#e8e8e8;border:1px solid #8a8a8a;border-right:0;overflow:hidden"><div class="pg" style="left:6px;top:3px;width:13px;height:16px"></div><div class="t ff" style="left:23px;top:5px">Salt2 - Thunderbird</div></div>
<div class="a" style="left:181px;top:745px;width:132px;height:23px;background:#d0d0d0;border:1px solid #6a6a6a;border-left:2px solid #6a6a6a;overflow:hidden"><div class="t ff" style="left:22px;top:5px">Custom graphs - Mozilla</div></div>
<svg class="a" style="left:186px;top:748px" width="16" height="16" viewBox="0 0 16 16"><circle cx="9" cy="7" r="6.2" fill="#3d74c8"/><circle cx="10" cy="5.5" r="3" fill="#6aa0e0"/><path d="M1.5,8.5 C1.5,4.5 4,2 6.5,1.8 C5,3.5 4.8,6.5 6.8,8.6 C9,10.8 13,10.3 14.8,7.6 C14.8,12.2 11.5,15.2 8,15.2 C4.3,15.2 1.5,12.3 1.5,8.5Z" fill="#e8701c" stroke="#a83c10" stroke-width="0.7"/></svg>
<div class="a" style="left:914px;top:746px;width:28px;height:20px;background:#2a3c70"></div>
<div class="a" style="left:915px;top:747px;width:26px;height:18px;background:#3a62b0;border:1px solid #e4e8f4"></div>
<div class="a" style="left:942px;top:747px;width:26px;height:18px;background:#e8e8e8;border:2px solid #111"></div>
<div class="a" style="left:969px;top:747px;width:26px;height:18px;background:#e8e8e8;border:2px solid #111"></div>
<div class="a" style="left:996px;top:747px;width:26px;height:18px;background:#e8e8e8;border:2px solid #111"></div>
<svg class="a" style="left:920px;top:748px" width="16" height="16" viewBox="0 0 16 16"><circle cx="9" cy="7" r="6.2" fill="#3d74c8"/><circle cx="10" cy="5.5" r="3" fill="#6aa0e0"/><path d="M1.5,8.5 C1.5,4.5 4,2 6.5,1.8 C5,3.5 4.8,6.5 6.8,8.6 C9,10.8 13,10.3 14.8,7.6 C14.8,12.2 11.5,15.2 8,15.2 C4.3,15.2 1.5,12.3 1.5,8.5Z" fill="#e8701c" stroke="#a83c10" stroke-width="0.7"/><path d="M3,9 C3.5,12 6,13.8 9,13.5" fill="none" stroke="#f8b040" stroke-width="1.2"/></svg>
<svg class="a" style="left:947px;top:748px" width="16" height="16" viewBox="0 0 16 16"><circle cx="9" cy="7" r="6.2" fill="#3d74c8"/><circle cx="10" cy="5.5" r="3" fill="#6aa0e0"/><path d="M1.5,8.5 C1.5,4.5 4,2 6.5,1.8 C5,3.5 4.8,6.5 6.8,8.6 C9,10.8 13,10.3 14.8,7.6 C14.8,12.2 11.5,15.2 8,15.2 C4.3,15.2 1.5,12.3 1.5,8.5Z" fill="#e8701c" stroke="#a83c10" stroke-width="0.7"/><path d="M3,9 C3.5,12 6,13.8 9,13.5" fill="none" stroke="#f8b040" stroke-width="1.2"/></svg>
<svg class="a" style="left:975px;top:748px" width="14" height="16" viewBox="0 0 14 16"><path d="M1.5,0.5 L9,0.5 L12.5,4 L12.5,15.5 L1.5,15.5Z" fill="#fff" stroke="#222"/><path d="M3,4 L7,4 M3,7 L8,7 M3,10 L5,10" stroke="#999" stroke-width="0.8"/><rect x="6.5" y="9" width="4" height="4" fill="#888"/></svg>
<svg class="a" style="left:1001px;top:748px" width="17" height="15" viewBox="0 0 17 15"><path d="M1,8 L9,2 L16,6 L8,13Z" fill="#e6e0d0" stroke="#8a8070" stroke-width="0.8"/><path d="M2,10 L8,14 L16,8" fill="none" stroke="#8a7a60" stroke-width="1"/><path d="M4,7 L10,3" stroke="#b0a890"/></svg>
</body></html>
